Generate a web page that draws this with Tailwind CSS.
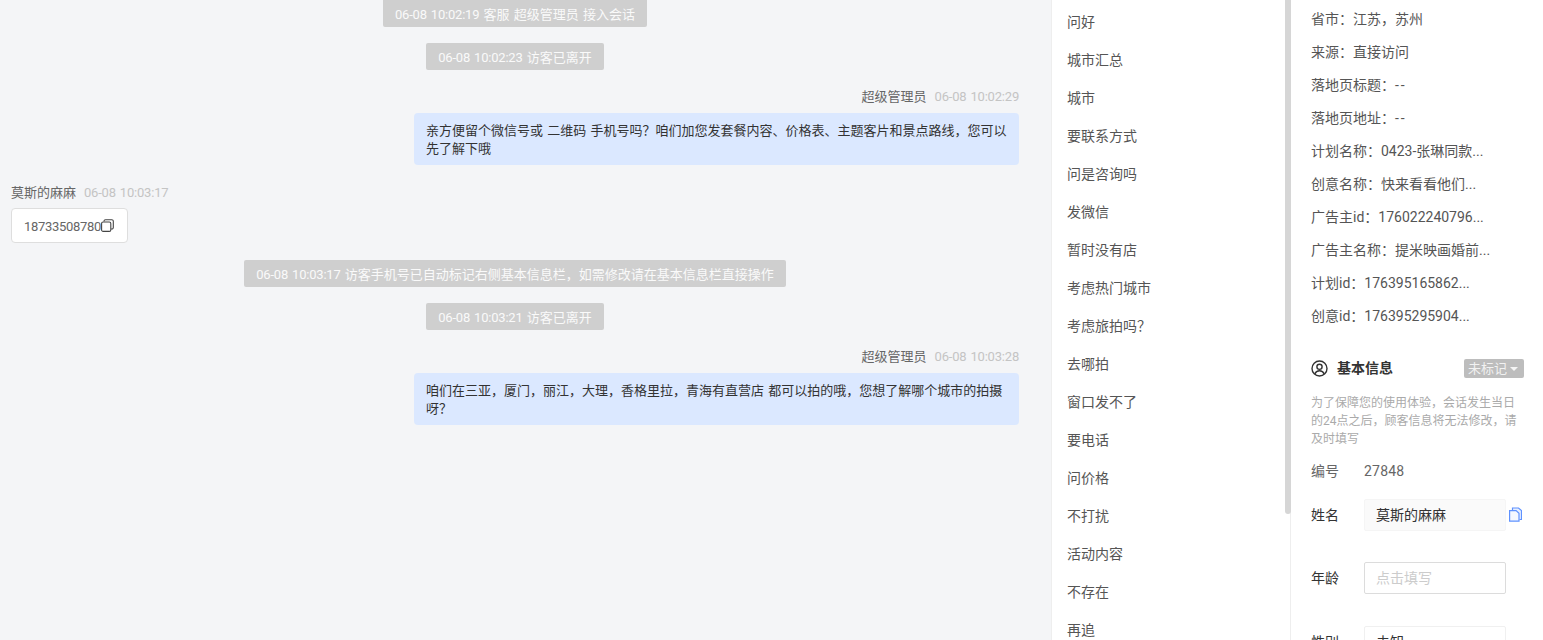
<!DOCTYPE html>
<html lang="zh-CN">
<head>
<meta charset="utf-8">
<script src="https://cdn.jsdelivr.net/npm/@tailwindcss/browser@4"></script>
</head>
<body class="m-0">
<div class="flex h-[640px] w-[1543px] overflow-hidden bg-white text-[13px] font-['Roboto','Noto_Sans_CJK_SC',sans-serif]">
  <main class="w-[1051px] shrink-0 bg-[#f4f5f7] pl-[11px] pr-[32px] flex flex-col [word-spacing:1px]">
    <div class="flex flex-col items-center gap-4">
      <div class="h-[27px] px-3 pt-[2px] flex items-center rounded-b-[2px] bg-[#cfcfcf] text-[#fafafa]"><p><span class="tracking-[-0.2px]">06-08 10:02:19</span> 客服 超级管理员 接入会话</p></div>
      <div class="h-[27px] px-3 pt-[2px] flex items-center rounded-[2px] bg-[#cfcfcf] text-[#fafafa]"><p><span class="tracking-[-0.2px]">06-08 10:02:23</span> 访客已离开</p></div>
    </div>
    <div class="mt-[17px] flex flex-col items-end">
      <div class="h-[26px] pt-[1px] flex items-start gap-2 leading-[18px] text-[#666]"><span>超级管理员</span><span class="text-[#c4c4c4] tracking-[-0.2px]">06-08 10:02:29</span></div>
      <div class="w-[605px] rounded-[4px] bg-[#dbe8ff] px-3 pt-[9px] pb-[7px] leading-[18px] text-[#333]">亲方便留个微信号或 二维码 手机号吗？咱们加您发套餐内容、价格表、主题客片和景点路线，您可以先了解下哦</div>
    </div>
    <div class="mt-[18px] flex flex-col items-start">
      <div class="h-[25px] pt-[1px] flex items-start gap-2 leading-[18px] text-[#666]"><span>莫斯的麻麻</span><span class="text-[#c4c4c4] tracking-[-0.2px]">06-08 10:03:17</span></div>
      <div class="h-[35px] w-[117px] pt-[2px] flex items-center pl-[12px] rounded-[4px] border border-[#dedede] bg-white text-[#666]">
        <span class="tracking-[-0.3px]">18733508780</span>
        <svg class="-mt-[2px] w-[13px] h-[13px] shrink-0" viewBox="0 0 13 13" fill="none" stroke="#444" stroke-width="1.1"><path d="M3 2.500V2.200A1.500 1.500 0 0 1 4.500 .7H10.800A1.500 1.500 0 0 1 12.300 2.200V8.500A1.500 1.500 0 0 1 10.800 10H10"/><rect x="0.6" y="3" width="9.2" height="9.400" rx="1.500"/></svg>
      </div>
    </div>
    <div class="mt-[17px] flex flex-col items-center gap-4">
      <div class="h-[27px] px-3 pt-[2px] flex items-center rounded-[2px] bg-[#cfcfcf] text-[#fafafa]"><p><span class="tracking-[-0.2px]">06-08 10:03:17</span> 访客手机号已自动标记右侧基本信息栏，如需修改请在基本信息栏直接操作</p></div>
      <div class="h-[27px] px-3 pt-[2px] flex items-center rounded-[2px] bg-[#cfcfcf] text-[#fafafa]"><p><span class="tracking-[-0.2px]">06-08 10:03:21</span> 访客已离开</p></div>
    </div>
    <div class="mt-[17px] flex flex-col items-end">
      <div class="h-[26px] pt-[1px] flex items-start gap-2 leading-[18px] text-[#666]"><span>超级管理员</span><span class="text-[#c4c4c4] tracking-[-0.2px]">06-08 10:03:28</span></div>
      <div class="w-[605px] rounded-[4px] bg-[#dbe8ff] px-3 pt-[9px] pb-[7px] leading-[18px] text-[#333]">咱们在三亚，厦门，丽江，大理，香格里拉，青海有直营店 都可以拍的哦，您想了解哪个城市的拍摄呀？</div>
    </div>
  </main>
  <aside class="relative w-[240px] shrink-0 border-l border-r border-[#eeeeee] pl-[15px] pt-[3px] text-[14px] text-[#555]">
    <ul class="flex flex-col">
      <li class="h-[38px] flex items-center">问好</li>
      <li class="h-[38px] flex items-center">城市汇总</li>
      <li class="h-[38px] flex items-center">城市</li>
      <li class="h-[38px] flex items-center">要联系方式</li>
      <li class="h-[38px] flex items-center">问是咨询吗</li>
      <li class="h-[38px] flex items-center">发微信</li>
      <li class="h-[38px] flex items-center">暂时没有店</li>
      <li class="h-[38px] flex items-center">考虑热门城市</li>
      <li class="h-[38px] flex items-center">考虑旅拍吗？</li>
      <li class="h-[38px] flex items-center">去哪拍</li>
      <li class="h-[38px] flex items-center">窗口发不了</li>
      <li class="h-[38px] flex items-center">要电话</li>
      <li class="h-[38px] flex items-center">问价格</li>
      <li class="h-[38px] flex items-center">不打扰</li>
      <li class="h-[38px] flex items-center">活动内容</li>
      <li class="h-[38px] flex items-center">不存在</li>
      <li class="h-[38px] flex items-center">再追</li>
    </ul>
    <div class="absolute right-[-1px] top-0 h-[514px] w-[6px] rounded-b-[3px] bg-[#d6d6d6]"></div>
  </aside>
  <section class="flex-1 min-w-0 pl-[20px] pr-[19px] pt-[3px] text-[14px] text-[#555]">
    <ul class="flex flex-col">
      <li class="h-[33px] flex items-center">省市：江苏，苏州</li>
      <li class="h-[33px] flex items-center">来源：直接访问</li>
      <li class="h-[33px] flex items-center"><p>落地页标题：<span class="tracking-[2px]">--</span></p></li>
      <li class="h-[33px] flex items-center"><p>落地页地址：<span class="tracking-[2px]">--</span></p></li>
      <li class="h-[33px] flex items-center">计划名称：0423-张琳同款...</li>
      <li class="h-[33px] flex items-center">创意名称：快来看看他们...</li>
      <li class="h-[33px] flex items-center">广告主id：176022240796...</li>
      <li class="h-[33px] flex items-center">广告主名称：提米映画婚前...</li>
      <li class="h-[33px] flex items-center">计划id：176395165862...</li>
      <li class="h-[33px] flex items-center">创意id：176395295904...</li>
    </ul>
    <div class="mt-[26px] flex items-center h-[19px] gap-[9px]">
      <svg class="w-[17px] h-[17px] shrink-0" viewBox="0 0 17 17" fill="none" stroke="#333" stroke-width="1.400"><circle cx="8.500" cy="8.500" r="7.500"/><circle cx="8.500" cy="6.800" r="2.600"/><path d="M3.800 14c.9-2.200 2.700-3.200 4.700-3.200s3.800 1 4.700 3.200"/></svg>
      <span class="font-bold text-[#333]">基本信息</span>
      <div class="ml-auto h-[19px] w-[60px] pl-[4px] flex items-center gap-[3px] rounded-[2px] bg-[#bdbdbd] text-[13px] text-[#f2f2f2]">未标记<span class="w-0 h-0 border-x-[4px] border-t-[4px] border-x-transparent border-t-[#f5f5f5]"></span></div>
    </div>
    <p class="mt-[16px] text-[12px] leading-[18px] text-[#aaa]">为了保障您的使用体验，会话发生当日的24点之后，顾客信息将无法修改，请及时填写</p>
    <div class="mt-[14px] flex items-center h-[18px]"><span class="w-[53px] text-[#666]">编号</span><span class="text-[#666] tracking-[0.2px]">27848</span></div>
    <div class="mt-[19px] flex items-center h-[32px]">
      <span class="w-[53px] text-[#333]">姓名</span>
      <div class="w-[142px] h-[32px] flex items-center pl-[11px] rounded-[2px] border border-[#f5f5f5] bg-[#fafafa] text-[#333]">莫斯的麻麻</div>
      <svg class="ml-[3px] -mt-[1px] w-[13px] h-[15px] shrink-0" viewBox="0 0 13 15" fill="none" stroke="#5f92ff" stroke-width="1.200"><path d="M3.500 3V1h6l3 2.500V12.500H10.500" fill="#e8efff"/><path d="M.6 3.600h6.500l2.900 2.600v8H.6z" fill="#f5f8ff"/></svg>
    </div>
    <div class="mt-[31px] flex items-center h-[32px]">
      <span class="w-[53px] text-[#333]">年龄</span>
      <div class="w-[142px] h-[32px] flex items-center pl-[11px] rounded-[2px] border border-[#dcdcdc] text-[#ccc]">点击填写</div>
    </div>
    <div class="mt-[32px] flex items-center h-[32px]">
      <span class="w-[53px] text-[#333]">性别</span>
      <div class="w-[142px] h-[32px] flex items-center pl-[11px] rounded-[2px] border border-[#f0f0f0] text-[#333]">未知</div>
    </div>
  </section>
</div>
</body>
</html>
